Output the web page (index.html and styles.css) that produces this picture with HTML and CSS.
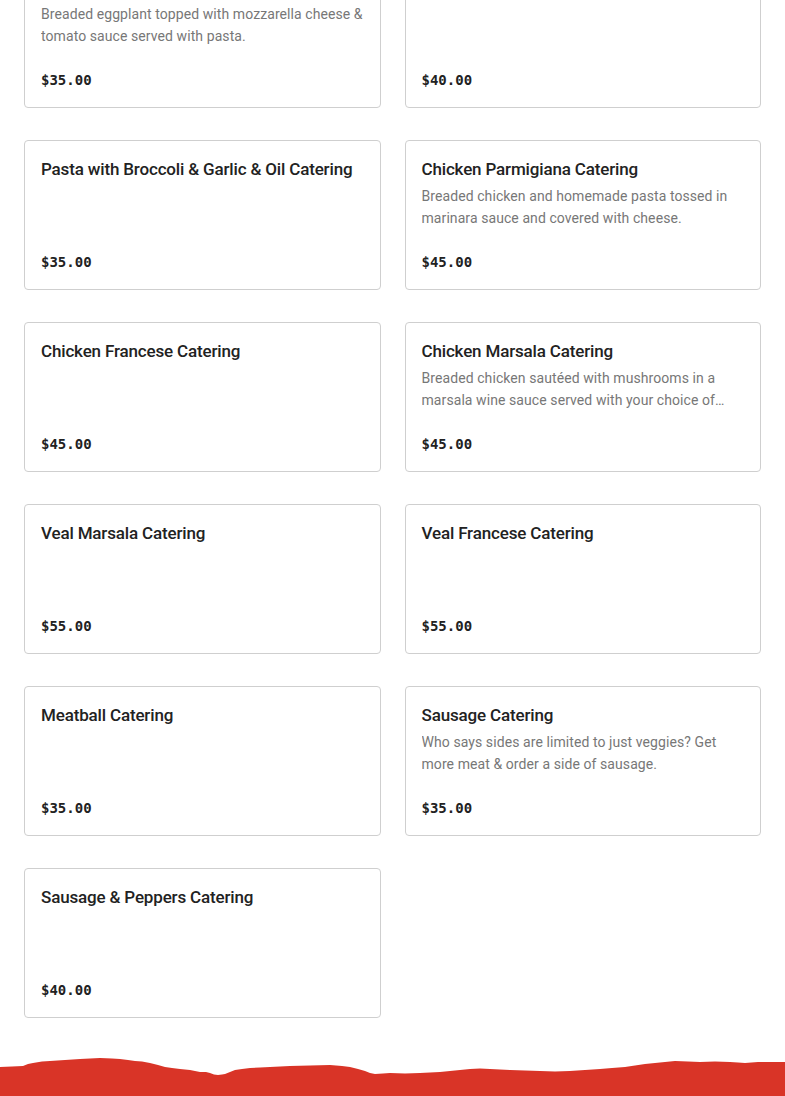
FILE: index.html
```html
<!DOCTYPE html>
<html lang="en">
<head>
    <meta charset="UTF-8">
    <meta name="viewport" content="width=device-width, initial-scale=1.0">
    <title>Catering Menu</title>
    <link rel="stylesheet" href="styles.css">
</head>
<body>
    <div class="menu">
        <div class="menu-grid">
            <div class="item">
                <h3 class="item-name">Eggplant Parmigiana Catering</h3>
                <p class="item-desc">Breaded eggplant topped with mozzarella cheese &amp; tomato sauce served with pasta.</p>
                <span class="item-price">$35.00</span>
            </div>
            <div class="item">
                <h3 class="item-name">Baked Ziti Catering</h3>
                <p class="item-desc"></p>
                <span class="item-price">$40.00</span>
            </div>
            <div class="item">
                <h3 class="item-name">Pasta with Broccoli &amp; Garlic &amp; Oil Catering</h3>
                <p class="item-desc"></p>
                <span class="item-price">$35.00</span>
            </div>
            <div class="item">
                <h3 class="item-name">Chicken Parmigiana Catering</h3>
                <p class="item-desc">Breaded chicken and homemade pasta tossed in marinara sauce and covered with cheese.</p>
                <span class="item-price">$45.00</span>
            </div>
            <div class="item">
                <h3 class="item-name">Chicken Francese Catering</h3>
                <p class="item-desc"></p>
                <span class="item-price">$45.00</span>
            </div>
            <div class="item">
                <h3 class="item-name">Chicken Marsala Catering</h3>
                <p class="item-desc">Breaded chicken sautéed with mushrooms in a marsala wine sauce served with your choice of pasta.</p>
                <span class="item-price">$45.00</span>
            </div>
            <div class="item">
                <h3 class="item-name">Veal Marsala Catering</h3>
                <p class="item-desc"></p>
                <span class="item-price">$55.00</span>
            </div>
            <div class="item">
                <h3 class="item-name">Veal Francese Catering</h3>
                <p class="item-desc"></p>
                <span class="item-price">$55.00</span>
            </div>
            <div class="item">
                <h3 class="item-name">Meatball Catering</h3>
                <p class="item-desc"></p>
                <span class="item-price">$35.00</span>
            </div>
            <div class="item">
                <h3 class="item-name">Sausage Catering</h3>
                <p class="item-desc">Who says sides are limited to just veggies? Get more meat &amp; order a side of sausage.</p>
                <span class="item-price">$35.00</span>
            </div>
            <div class="item">
                <h3 class="item-name">Sausage &amp; Peppers Catering</h3>
                <p class="item-desc"></p>
                <span class="item-price">$40.00</span>
            </div>
        </div>
    </div>

    <footer class="footer">
        <svg class="torn-edge" viewBox="0 0 785 20" preserveAspectRatio="none">
            <path d="M0 11 L12 10.5 L23 10 L28 8 L33 7 L42 5.5 L50 5 L65 4 L80 3 L90 2.5 L100 2 L112 2.5 L120 3 L128 4 L135 5 L142 5.5 L150 7 L158 9 L165 11 L172 12 L180 13 L190 14 L200 16 L206 16 L210 17 L214 18.5 L218 19 L222 18.5 L225 18 L230 16 L235 14 L242 13 L250 12 L260 11.5 L270 11 L280 10.5 L290 10 L310 9.5 L330 9 L342 10 L350 11 L358 13 L365 15 L370 17 L375 18 L383 17.5 L390 17 L405 17.5 L420 17 L430 16.5 L440 16 L455 14.5 L470 13 L480 12.5 L490 13 L500 13.5 L510 14 L525 14.5 L540 15 L555 15.5 L570 15 L585 14 L600 13 L612 12 L625 11 L635 9.5 L645 8 L655 7 L665 6 L675 5 L688 5.5 L700 6 L715 5.5 L730 6 L738 6.5 L745 7 L758 6 L770 6 L785 6 L785 20 L0 20 Z" fill="#d93427"/>
        </svg>
        <div class="footer-body"></div>
    </footer>
</body>
</html>
```

FILE: styles.css
```css
body { margin: 0; background: #fff; font-family: Roboto, "Liberation Sans", sans-serif; color: #222; }
.menu { padding: 0 24px; }
.menu-grid { display: grid; grid-template-columns: 1fr 1fr; column-gap: 24px; row-gap: 32px; margin-top: -42px; }
.item { height: 150px; box-sizing: border-box; border: 1px solid #cfcfcf; border-radius: 4px; padding: 16px 16px 17px; display: flex; flex-direction: column; }
.item-name { margin: 0; font-size: 17px; line-height: 24px; font-weight: 500; letter-spacing: -0.16px; color: #222; }
.item-desc { margin: 4px 0 0; font-size: 14px; line-height: 22px; letter-spacing: 0.08px; color: #777; display: -webkit-box; -webkit-line-clamp: 2; -webkit-box-orient: vertical; overflow: hidden; }
.item-price { margin-top: auto; font-family: "DejaVu Sans Mono", "Liberation Mono", monospace; font-size: 14px; line-height: 20px; font-weight: bold; color: #222; }
.footer { margin-top: 38px; }
.torn-edge { display: block; width: 100%; height: 20px; }
.footer-body { background: #d93427; height: 40px; }
```
